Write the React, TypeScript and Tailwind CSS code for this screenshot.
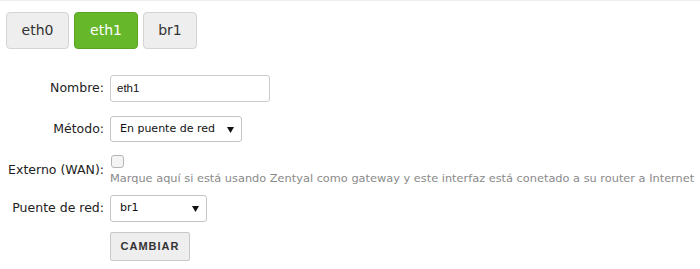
import React from "react";

const verdana = { fontFamily: '"DejaVu Sans", Verdana, sans-serif' };

function Arrow() {
  return (
    <svg width="7" height="7" viewBox="0 0 7 7" className="block">
      <path d="M0 1 L7 1 L3.5 7 Z" fill="#111" />
    </svg>
  );
}

export default function App() {
  return (
    <div className="w-[700px] h-[269px] bg-white border-t border-[#eeeeee] overflow-hidden" style={verdana}>
      <div className="flex gap-[5px] pl-[6px] pt-[11px]">
        <div className="w-[63px] h-[37px] flex items-center justify-center rounded-[4px] border border-[#d4d4d4] bg-[#eeeeee] text-[#333] text-[14px]">eth0</div>
        <div className="w-[64px] h-[37px] flex items-center justify-center rounded-[4px] border border-[#5aa323] bg-[#67b72b] text-white text-[14px]">eth1</div>
        <div className="w-[54px] h-[37px] flex items-center justify-center rounded-[4px] border border-[#d4d4d4] bg-[#eeeeee] text-[#333] text-[14px]">br1</div>
      </div>

      <div className="flex flex-col mt-[26px] text-[12.5px] text-[#222]">
        <div className="flex items-center gap-[6px]">
          <div className="w-[104px] text-right">Nombre:</div>
          <div className="w-[160px] h-[27px] flex items-center px-[6px] border border-[#cccccc] rounded-[3px] bg-white text-[11.5px] text-[#111]" style={{ fontFamily: '"Liberation Sans", Arial, sans-serif' }}>eth1</div>
        </div>

        <div className="flex items-center gap-[6px] mt-[14px]">
          <div className="w-[104px] text-right">Método:</div>
          <div className="w-[132px] h-[26px] flex items-center justify-between pl-[9px] pr-[7px] border border-[#c4c4c4] rounded-[3px] bg-white text-[11px] text-[#111]">
            <span>En puente de red</span>
            <Arrow />
          </div>
        </div>

        <div className="flex items-center gap-[6px] mt-[13px]">
          <div className="w-[104px] text-right">Externo (WAN):</div>
          <div className="flex flex-col">
            <div className="ml-[1px] w-[13px] h-[13px] rounded-[3px] border border-[#b5b5b5] bg-[#f4f4f4]" />
            <div className="mt-[3px] text-[11.35px] leading-[14px] text-[#8a8a8a]">Marque aquí si está usando Zentyal como gateway y este interfaz está conetado a su router a Internet</div>
          </div>
        </div>

        <div className="flex items-center gap-[6px] mt-[10px]">
          <div className="w-[104px] text-right">Puente de red:</div>
          <div className="w-[97px] h-[27px] flex items-center justify-between pl-[9px] pr-[7px] border border-[#c4c4c4] rounded-[3px] bg-white text-[11px] text-[#111]">
            <span>br1</span>
            <Arrow />
          </div>
        </div>

        <div className="flex gap-[6px] mt-[10px]">
          <div className="w-[104px]" />
          <div className="w-[80px] h-[29px] flex items-center justify-center border border-[#c8c8c8] rounded-[2px] bg-[#eeeeee] text-[11px] font-bold tracking-[1px] text-[#333]" style={{ fontFamily: '"Liberation Sans", Arial, sans-serif' }}>CAMBIAR</div>
        </div>
      </div>
    </div>
  );
}
